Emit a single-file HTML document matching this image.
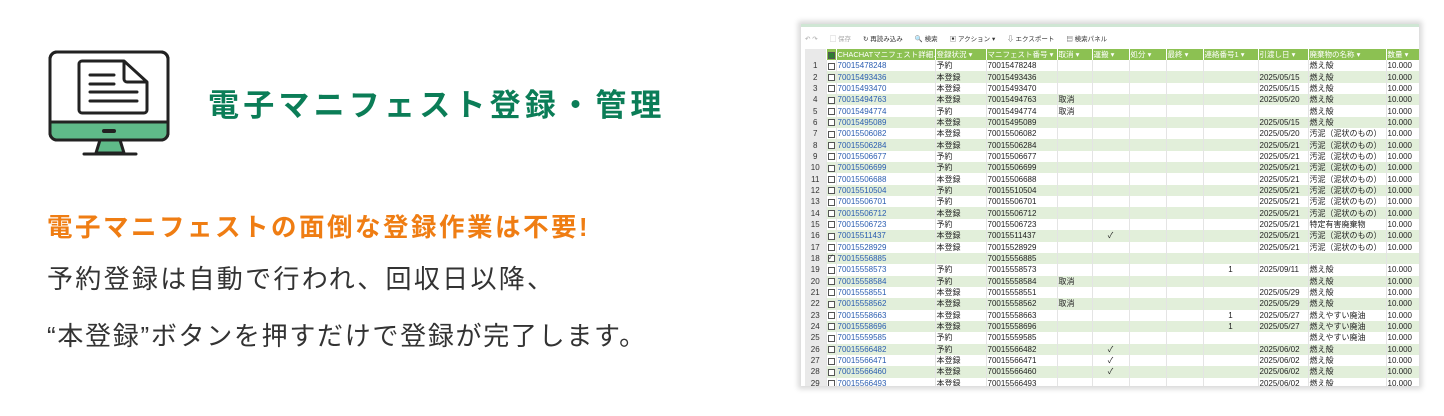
<!DOCTYPE html>
<html><head><meta charset="utf-8">
<style>
*{margin:0;padding:0;box-sizing:border-box}
body{width:1444px;height:416px;background:#fff;position:relative;overflow:hidden;font-family:"Liberation Sans","Noto Sans CJK JP",sans-serif}
.title{position:absolute;left:208px;top:86px;font-size:31px;font-weight:bold;color:#0b7d57;letter-spacing:4.2px;white-space:nowrap;line-height:40px}
.orange{position:absolute;left:47px;top:210px;font-size:25.5px;font-weight:bold;color:#ef7d13;white-space:nowrap;line-height:36px;letter-spacing:2.5px}
.l{position:absolute;left:47px;font-size:26px;color:#333;white-space:nowrap;line-height:36px;letter-spacing:1.2px}
.shot{position:absolute;left:801px;top:24px;width:618px;height:362px;background:#fff;box-shadow:0 0 5px 3px #d9d9d9;overflow:hidden}
.topline{position:absolute;left:0;top:0;width:100%;height:3px;background:#cfe6d4}
.tb{position:absolute;left:4px;top:9px;font-size:6.5px;color:#333;white-space:nowrap}
.tb span{display:inline-block;margin-right:12px}
table{position:absolute;left:4px;top:25px;border-collapse:collapse;font-size:8px;table-layout:fixed;width:640px}
td{height:11.35px;padding:0 1px;white-space:nowrap;overflow:hidden;border-right:1px solid #e4e4e4;line-height:11px;color:#222}
tr.h td{background:#8cc152;color:#fff;font-size:7.5px;border-right:1px solid #fff;height:11px}
tr:nth-child(odd):not(.h) td{background:#e2efda}
td.n{background:#e9e9e9!important;text-align:center;color:#333}
td.a{color:#2a5db0}
.cb{display:inline-block;width:7px;height:7px;border:1px solid #555;background:#fff;vertical-align:middle}
</style></head><body>
<svg style="position:absolute;left:0;top:0" width="200" height="170">
<rect x="50" y="52" width="118" height="88" rx="7" fill="#fff" stroke="#222" stroke-width="3"/>
<path d="M51.5 122 H166.5 V133 a5.5 5.5 0 0 1 -5.5 5.5 H57 a5.5 5.5 0 0 1 -5.5 -5.5Z" fill="#5fba89"/>
<line x1="51" y1="122" x2="167" y2="122" stroke="#222" stroke-width="3"/>
<rect x="50" y="52" width="118" height="88" rx="7" fill="none" stroke="#222" stroke-width="3"/>
<rect x="102" y="129" width="14" height="4" rx="2" fill="#222"/>
<path d="M100 140 L96 153 H124 L120 140Z" fill="#5fba89" stroke="#222" stroke-width="3" stroke-linejoin="round"/>
<line x1="84" y1="154" x2="136" y2="154" stroke="#222" stroke-width="3" stroke-linecap="round"/>
<path d="M82 61 H124 L147 82 V110 a3 3 0 0 1 -3 3 H82 a3 3 0 0 1 -3 -3 V64 a3 3 0 0 1 3 -3Z" fill="#fff" stroke="#222" stroke-width="3" stroke-linejoin="round"/>
<path d="M124 61 V79 a3 3 0 0 0 3 3 H147" fill="none" stroke="#222" stroke-width="3" stroke-linejoin="round"/>
<g stroke="#222" stroke-width="3" stroke-linecap="round"><line x1="90" y1="75" x2="114" y2="75"/><line x1="90" y1="84" x2="114" y2="84"/><line x1="90" y1="92" x2="137" y2="92"/><line x1="90" y1="101" x2="137" y2="101"/></g>
</svg>
<div class="title">電子マニフェスト登録・管理</div>
<div class="orange">電子マニフェストの面倒な登録作業は不要!</div>
<div class="l" style="top:261px;letter-spacing:2.3px">予約登録は自動で行われ、回収日以降、</div>
<div class="l" style="top:318px;letter-spacing:1.7px">“本登録”ボタンを押すだけで登録が完了します。</div>

<div class="shot">
<div class="topline"></div>
<div class="tb"><span style="color:#aaa">↶ ↷</span><span style="color:#aaa">▢ 保存</span><span>↻ 再読み込み</span><span>🔍 検索</span><span>▣ アクション ▾</span><span>⇩ エクスポート</span><span>▤ 検索パネル</span></div>
<table>
<colgroup><col style="width:21px"><col style="width:10px"><col style="width:99px"><col style="width:51px"><col style="width:71px"><col style="width:35px"><col style="width:37px"><col style="width:37px"><col style="width:37px"><col style="width:55px"><col style="width:50px"><col style="width:78px"><col style="width:60px"></colgroup>
<tr class="h"><td class="n"></td><td><span class="cb" style="background:#2e7d32"></span></td><td>CHACHATマニフェスト詳細…</td><td>登録状況 ▾</td><td>マニフェスト番号 ▾</td><td>取消 ▾</td><td>運搬 ▾</td><td>処分 ▾</td><td>最終 ▾</td><td>連絡番号1 ▾</td><td>引渡し日 ▾</td><td>廃棄物の名称 ▾</td><td>数量 ▾</td></tr>
<tr><td class="n">1</td><td><span class="cb"></span></td><td class="a">70015478248</td><td>予約</td><td>70015478248</td><td></td><td></td><td></td><td></td><td></td><td></td><td>燃え殻</td><td>10.000</td></tr>
<tr><td class="n">2</td><td><span class="cb"></span></td><td class="a">70015493436</td><td>本登録</td><td>70015493436</td><td></td><td></td><td></td><td></td><td></td><td>2025/05/15</td><td>燃え殻</td><td>10.000</td></tr>
<tr><td class="n">3</td><td><span class="cb"></span></td><td class="a">70015493470</td><td>本登録</td><td>70015493470</td><td></td><td></td><td></td><td></td><td></td><td>2025/05/15</td><td>燃え殻</td><td>10.000</td></tr>
<tr><td class="n">4</td><td><span class="cb"></span></td><td class="a">70015494763</td><td>本登録</td><td>70015494763</td><td>取消</td><td></td><td></td><td></td><td></td><td>2025/05/20</td><td>燃え殻</td><td>10.000</td></tr>
<tr><td class="n">5</td><td><span class="cb"></span></td><td class="a">70015494774</td><td>予約</td><td>70015494774</td><td>取消</td><td></td><td></td><td></td><td></td><td></td><td>燃え殻</td><td>10.000</td></tr>
<tr><td class="n">6</td><td><span class="cb"></span></td><td class="a">70015495089</td><td>本登録</td><td>70015495089</td><td></td><td></td><td></td><td></td><td></td><td>2025/05/15</td><td>燃え殻</td><td>10.000</td></tr>
<tr><td class="n">7</td><td><span class="cb"></span></td><td class="a">70015506082</td><td>本登録</td><td>70015506082</td><td></td><td></td><td></td><td></td><td></td><td>2025/05/20</td><td>汚泥（泥状のもの）</td><td>10.000</td></tr>
<tr><td class="n">8</td><td><span class="cb"></span></td><td class="a">70015506284</td><td>本登録</td><td>70015506284</td><td></td><td></td><td></td><td></td><td></td><td>2025/05/21</td><td>汚泥（泥状のもの）</td><td>10.000</td></tr>
<tr><td class="n">9</td><td><span class="cb"></span></td><td class="a">70015506677</td><td>予約</td><td>70015506677</td><td></td><td></td><td></td><td></td><td></td><td>2025/05/21</td><td>汚泥（泥状のもの）</td><td>10.000</td></tr>
<tr><td class="n">10</td><td><span class="cb"></span></td><td class="a">70015506699</td><td>予約</td><td>70015506699</td><td></td><td></td><td></td><td></td><td></td><td>2025/05/21</td><td>汚泥（泥状のもの）</td><td>10.000</td></tr>
<tr><td class="n">11</td><td><span class="cb"></span></td><td class="a">70015506688</td><td>本登録</td><td>70015506688</td><td></td><td></td><td></td><td></td><td></td><td>2025/05/21</td><td>汚泥（泥状のもの）</td><td>10.000</td></tr>
<tr><td class="n">12</td><td><span class="cb"></span></td><td class="a">70015510504</td><td>予約</td><td>70015510504</td><td></td><td></td><td></td><td></td><td></td><td>2025/05/21</td><td>汚泥（泥状のもの）</td><td>10.000</td></tr>
<tr><td class="n">13</td><td><span class="cb"></span></td><td class="a">70015506701</td><td>予約</td><td>70015506701</td><td></td><td></td><td></td><td></td><td></td><td>2025/05/21</td><td>汚泥（泥状のもの）</td><td>10.000</td></tr>
<tr><td class="n">14</td><td><span class="cb"></span></td><td class="a">70015506712</td><td>本登録</td><td>70015506712</td><td></td><td></td><td></td><td></td><td></td><td>2025/05/21</td><td>汚泥（泥状のもの）</td><td>10.000</td></tr>
<tr><td class="n">15</td><td><span class="cb"></span></td><td class="a">70015506723</td><td>予約</td><td>70015506723</td><td></td><td></td><td></td><td></td><td></td><td>2025/05/21</td><td>特定有害廃棄物</td><td>10.000</td></tr>
<tr><td class="n">16</td><td><span class="cb"></span></td><td class="a">70015511437</td><td>本登録</td><td>70015511437</td><td></td><td style="text-align:center">✓</td><td></td><td></td><td></td><td>2025/05/21</td><td>汚泥（泥状のもの）</td><td>10.000</td></tr>
<tr><td class="n">17</td><td><span class="cb"></span></td><td class="a">70015528929</td><td>本登録</td><td>70015528929</td><td></td><td></td><td></td><td></td><td></td><td>2025/05/21</td><td>汚泥（泥状のもの）</td><td>10.000</td></tr>
<tr><td class="n">18</td><td><span class="cb" style="font-size:6px;line-height:5px">✓</span></td><td class="a">70015556885</td><td></td><td>70015556885</td><td></td><td></td><td></td><td></td><td></td><td></td><td></td><td></td></tr>
<tr><td class="n">19</td><td><span class="cb"></span></td><td class="a">70015558573</td><td>予約</td><td>70015558573</td><td></td><td></td><td></td><td></td><td style="text-align:center">1</td><td>2025/09/11</td><td>燃え殻</td><td>10.000</td></tr>
<tr><td class="n">20</td><td><span class="cb"></span></td><td class="a">70015558584</td><td>予約</td><td>70015558584</td><td>取消</td><td></td><td></td><td></td><td></td><td></td><td>燃え殻</td><td>10.000</td></tr>
<tr><td class="n">21</td><td><span class="cb"></span></td><td class="a">70015558551</td><td>本登録</td><td>70015558551</td><td></td><td></td><td></td><td></td><td></td><td>2025/05/29</td><td>燃え殻</td><td>10.000</td></tr>
<tr><td class="n">22</td><td><span class="cb"></span></td><td class="a">70015558562</td><td>本登録</td><td>70015558562</td><td>取消</td><td></td><td></td><td></td><td></td><td>2025/05/29</td><td>燃え殻</td><td>10.000</td></tr>
<tr><td class="n">23</td><td><span class="cb"></span></td><td class="a">70015558663</td><td>本登録</td><td>70015558663</td><td></td><td></td><td></td><td></td><td style="text-align:center">1</td><td>2025/05/27</td><td>燃えやすい廃油</td><td>10.000</td></tr>
<tr><td class="n">24</td><td><span class="cb"></span></td><td class="a">70015558696</td><td>本登録</td><td>70015558696</td><td></td><td></td><td></td><td></td><td style="text-align:center">1</td><td>2025/05/27</td><td>燃えやすい廃油</td><td>10.000</td></tr>
<tr><td class="n">25</td><td><span class="cb"></span></td><td class="a">70015559585</td><td>予約</td><td>70015559585</td><td></td><td></td><td></td><td></td><td></td><td></td><td>燃えやすい廃油</td><td>10.000</td></tr>
<tr><td class="n">26</td><td><span class="cb"></span></td><td class="a">70015566482</td><td>予約</td><td>70015566482</td><td></td><td style="text-align:center">✓</td><td></td><td></td><td></td><td>2025/06/02</td><td>燃え殻</td><td>10.000</td></tr>
<tr><td class="n">27</td><td><span class="cb"></span></td><td class="a">70015566471</td><td>本登録</td><td>70015566471</td><td></td><td style="text-align:center">✓</td><td></td><td></td><td></td><td>2025/06/02</td><td>燃え殻</td><td>10.000</td></tr>
<tr><td class="n">28</td><td><span class="cb"></span></td><td class="a">70015566460</td><td>本登録</td><td>70015566460</td><td></td><td style="text-align:center">✓</td><td></td><td></td><td></td><td>2025/06/02</td><td>燃え殻</td><td>10.000</td></tr>
<tr><td class="n">29</td><td><span class="cb"></span></td><td class="a">70015566493</td><td>本登録</td><td>70015566493</td><td></td><td></td><td></td><td></td><td></td><td>2025/06/02</td><td>燃え殻</td><td>10.000</td></tr>
</table>
</div>
</body></html>
